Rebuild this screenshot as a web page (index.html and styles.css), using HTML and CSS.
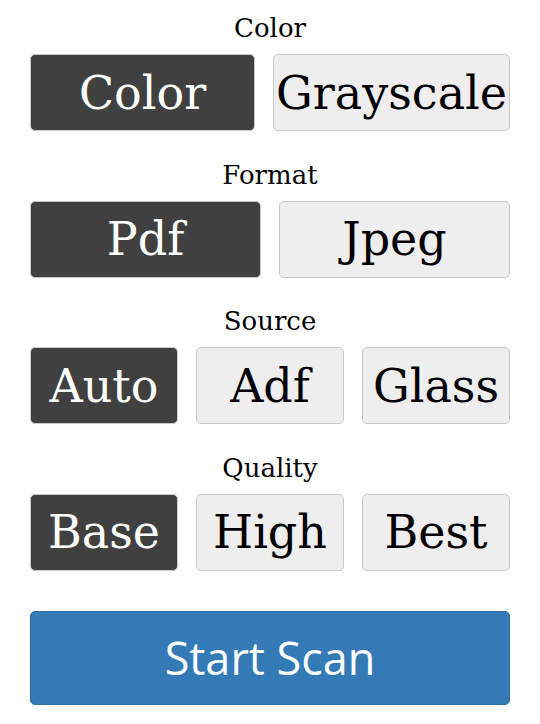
FILE: index.html
```html
<!DOCTYPE html>
<html>
<head>
<meta charset="utf-8">
<link rel="stylesheet" href="styles.css">
</head>
<body>
<div class="page">
  <section class="group">
    <div class="label">Color</div>
    <div class="row">
      <button class="opt active">Color</button>
      <button class="opt">Grayscale</button>
    </div>
  </section>
  <section class="group">
    <div class="label">Format</div>
    <div class="row">
      <button class="opt active">Pdf</button>
      <button class="opt">Jpeg</button>
    </div>
  </section>
  <section class="group">
    <div class="label">Source</div>
    <div class="row">
      <button class="opt active">Auto</button>
      <button class="opt">Adf</button>
      <button class="opt">Glass</button>
    </div>
  </section>
  <section class="group">
    <div class="label">Quality</div>
    <div class="row">
      <button class="opt active">Base</button>
      <button class="opt">High</button>
      <button class="opt">Best</button>
    </div>
  </section>
  <button class="start">Start Scan</button>
</div>
</body>
</html>
```
FILE: styles.css
```css
html, body {
  margin: 0;
  padding: 0;
  background: #fff;
}
.page {
  padding: 12px 30px 0 30px;
  display: flex;
  flex-direction: column;
  font-family: "DejaVu Serif", serif;
}
.group {
  display: flex;
  flex-direction: column;
  margin-bottom: 27.67px;
}
.label {
  font-size: 26px;
  line-height: 32px;
  text-align: center;
  color: #000;
  margin-bottom: 10px;
}
.row {
  display: flex;
  gap: 18px;
}
.opt {
  flex: 1 1 0;
  height: 77px;
  padding: 0 2px;
  margin: 0;
  border: 1px solid #c8c8c8;
  border-radius: 5px;
  background: #eeeeee;
  color: #000;
  font-family: "DejaVu Serif", serif;
  font-size: 46px;
  line-height: 1;
  white-space: nowrap;
}
.opt.active {
  background: #404040;
  color: #fff;
}
.start {
  margin-top: 12px;
  height: 94px;
  border: 1px solid #2e6da4;
  border-radius: 5px;
  background: #337ab7;
  color: #fff;
  font-family: "Open Sans", sans-serif;
  font-size: 45px;
  padding: 0;
}
```
